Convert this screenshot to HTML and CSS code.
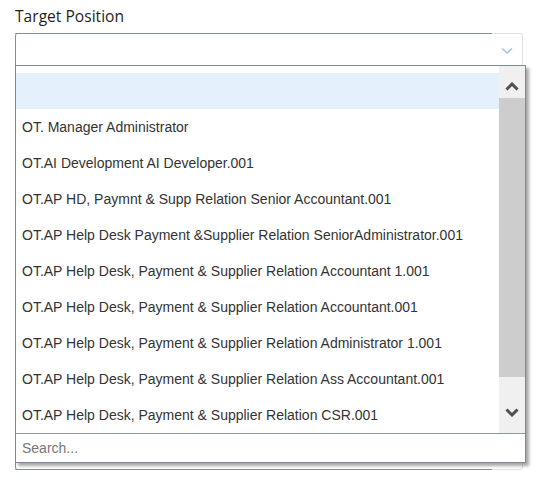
FILE: index.html
```html
<!DOCTYPE html>
<html>
<head>
<meta charset="utf-8">
<link rel="stylesheet" href="styles.css">
</head>
<body>
<div class="page">
  <label class="label">Target Position</label>
  <div class="select">
    <div class="control">
      <span class="indicator">
        <svg width="12" height="8" viewBox="0 0 12 8"><path d="M1 1.5 L6 6 L11 1.5" fill="none" stroke="#9fc4ea" stroke-width="1.6"/></svg>
      </span>
    </div>
    <div class="menu">
      <div class="menu-body">
        <ul class="options">
          <li class="option is-active">&nbsp;</li>
          <li class="option">OT. Manager Administrator</li>
          <li class="option">OT.AI Development AI Developer.001</li>
          <li class="option">OT.AP HD, Paymnt &amp; Supp Relation Senior Accountant.001</li>
          <li class="option">OT.AP Help Desk Payment &amp;Supplier Relation SeniorAdministrator.001</li>
          <li class="option">OT.AP Help Desk, Payment &amp; Supplier Relation Accountant 1.001</li>
          <li class="option">OT.AP Help Desk, Payment &amp; Supplier Relation Accountant.001</li>
          <li class="option">OT.AP Help Desk, Payment &amp; Supplier Relation Administrator 1.001</li>
          <li class="option">OT.AP Help Desk, Payment &amp; Supplier Relation Ass Accountant.001</li>
          <li class="option">OT.AP Help Desk, Payment &amp; Supplier Relation CSR.001</li>
        </ul>
        <div class="scrollbar">
          <div class="sb-btn sb-up">
            <svg width="14" height="9" viewBox="0 0 14 9"><path d="M1.5 7.5 L7 2 L12.5 7.5" fill="none" stroke="#4f4f4f" stroke-width="3"/></svg>
          </div>
          <div class="sb-track"><div class="sb-thumb"></div></div>
          <div class="sb-btn sb-down">
            <svg width="14" height="9" viewBox="0 0 14 9"><path d="M1.5 1.5 L7 7 L12.5 1.5" fill="none" stroke="#4f4f4f" stroke-width="3"/></svg>
          </div>
        </div>
      </div>
      <div class="search">Search...</div>
    </div>
  </div>
</div>
</body>
</html>
```
FILE: styles.css
```css
html, body {
  margin: 0;
  padding: 0;
  background: #ffffff;
}

.page {
  padding: 6px 0 0 15px;
}

.label {
  display: block;
  font-family: "Open Sans", "Noto Sans", sans-serif;
  font-size: 15.6px;
  line-height: 20px;
  color: #1f1f1f;
  margin-bottom: 7px;
}

.select {
  position: relative;
  box-sizing: border-box;
  width: 508px;
  height: 437px;
  border: 1px solid #dfe2e5;
  border-left-color: #7f8e98;
  border-radius: 3px;
}

.select::before,
.select::after {
  content: "";
  position: absolute;
  left: -1px;
  right: 30px;
  height: 1px;
  background: #7f8e98;
}

.select::before { top: -1px; border-top-left-radius: 3px; }
.select::after { bottom: -1px; border-bottom-left-radius: 3px; }

.control {
  height: 31px;
  display: flex;
  justify-content: flex-end;
  align-items: center;
}

.indicator {
  width: 31px;
  height: 31px;
  display: flex;
  align-items: center;
  justify-content: center;
  padding-top: 2px;
  box-sizing: border-box;
}

.menu {
  position: absolute;
  top: 31px;
  left: -1px;
  box-sizing: border-box;
  width: 511px;
  height: 398px;
  border: 1px solid #7b8a94;
  background: #ffffff;
  box-shadow: 3px 3px 3px rgba(0, 0, 0, 0.35);
  display: flex;
  flex-direction: column;
}

.menu-body {
  height: 367px;
  display: flex;
  overflow: hidden;
}

.options {
  flex: 1;
  list-style: none;
  margin: 0;
  padding: 7px 0 0 0;
  overflow: hidden;
}

.option {
  height: 36px;
  line-height: 36px;
  padding-left: 6px;
  font-family: "Liberation Sans", Arial, sans-serif;
  font-size: 14px;
  color: #333333;
  white-space: nowrap;
}

.option.is-active {
  background: #e4f1fd;
}

.scrollbar {
  width: 26px;
  background: #f0f0f0;
  display: flex;
  flex-direction: column;
}

.sb-btn {
  display: flex;
  align-items: center;
  justify-content: center;
}

.sb-up { height: 32px; padding-top: 8px; box-sizing: border-box; }
.sb-down { height: 33px; padding-bottom: 8px; box-sizing: border-box; }

.sb-track {
  flex: 1;
}

.sb-thumb {
  height: 279px;
  background: #cdcdcd;
}

.search {
  flex: 1;
  border-top: 1px solid #8a98a1;
  padding-left: 6px;
  display: flex;
  align-items: center;
  font-family: "Liberation Sans", Arial, sans-serif;
  font-size: 14px;
  color: #767676;
}
```
